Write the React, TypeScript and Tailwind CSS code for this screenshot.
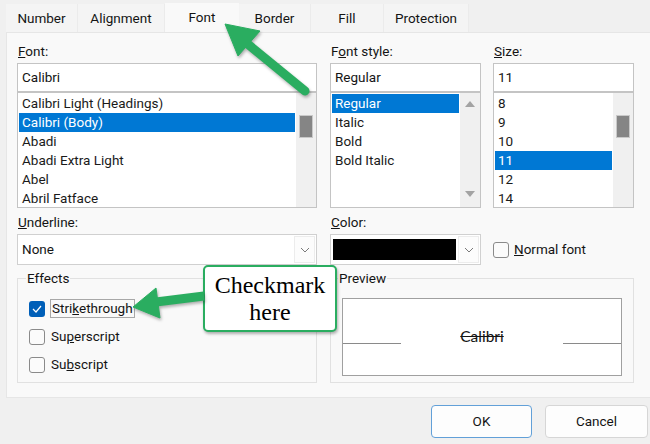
import React from "react";

const tabs = [
  { name: "Number", w: "w-[72px]" },
  { name: "Alignment", w: "w-[87px]" },
  { name: "Font", w: "w-[74px]", active: true },
  { name: "Border", w: "w-[72px]" },
  { name: "Fill", w: "w-[73px]" },
  { name: "Protection", w: "w-[85px]" },
];

const fonts = ["Calibri Light (Headings)", "Calibri (Body)", "Abadi", "Abadi Extra Light", "Abel", "Abril Fatface"];
const styles = ["Regular", "Italic", "Bold", "Bold Italic"];
const sizes = ["8", "9", "10", "11", "12", "14"];

function Chevron() {
  return (
    <svg width="10" height="6" viewBox="0 0 10 6">
      <path d="M1 1 L5 5 L9 1" fill="none" stroke="#7a7a7a" strokeWidth="1" />
    </svg>
  );
}

// scrollbar: either a thumb or the two arrows
function ScrollBar({ arrows }: { arrows?: boolean }) {
  return (
    <div className="w-[20px] shrink-0 bg-[#f0f0f0] flex flex-col items-center">
      {arrows ? (
        <div className="flex flex-col items-center justify-between h-full pt-[8px] pb-[10px]">
          <svg width="10" height="6" viewBox="0 0 10 6">
            <path d="M0 6 L5 0 L10 6 Z" fill="#a3a3a3" />
          </svg>
          <svg width="10" height="6" viewBox="0 0 10 6">
            <path d="M0 0 L10 0 L5 6 Z" fill="#a3a3a3" />
          </svg>
        </div>
      ) : (
        <div className="mt-[22px] w-[14px] h-[23px] bg-[#858585] border border-[#c9c9c9]" />
      )}
    </div>
  );
}

function ListBox({ items, selected, arrows }: { items: string[]; selected: number; arrows?: boolean }) {
  return (
    <div className="h-[116px] bg-white border border-[#c4c4c4] flex overflow-hidden">
      <div className="flex-1 pt-[1px] px-[1px]">
        {items.map((it, i) => (
          <div
            key={it}
            className={`h-[19px] leading-[19px] pl-[3px] whitespace-nowrap ${
              i === selected ? "bg-[#0078d4] text-white" : "text-[#1a1a1a]"
            }`}
          >
            {it}
          </div>
        ))}
      </div>
      <ScrollBar arrows={arrows} />
    </div>
  );
}

function Field({ label, value, items, selected, arrows, w }: {
  label: React.ReactNode; value: string; items: string[]; selected: number; arrows?: boolean; w: string;
}) {
  return (
    <div className={`${w} flex flex-col`}>
      <div className="h-[18px] leading-[18px] pl-px">{label}</div>
      <div className="mt-[3px] h-[29px] bg-white border border-[#c4c4c4] pl-[4px] leading-[27px]">{value}</div>
      <ListBox items={items} selected={selected} arrows={arrows} />
    </div>
  );
}

function Check({ checked }: { checked?: boolean }) {
  return checked ? (
    <div className="w-[16px] h-[16px] rounded-[3px] bg-[#005fb8] flex items-center justify-center">
      <svg width="10" height="8" viewBox="0 0 10 8">
        <path d="M1 4 L4 7 L9 1" fill="none" stroke="white" strokeWidth="1.2" />
      </svg>
    </div>
  ) : (
    <div className="w-[16px] h-[16px] rounded-[3px] bg-[#fbfbfb] border border-[#8a8a8a]" />
  );
}

export default function App() {
  return (
    <div className="w-[650px] h-[444px] bg-[#f0f0f0] overflow-hidden relative font-['Roboto','Noto_Sans',sans-serif] text-[13.5px] text-[#141414]">
      {/* TABS */}
      <div className="flex items-end h-[32px] pl-[6px]">
        {tabs.map((t) => (
          <div
            key={t.name}
            className={`${t.w} flex items-center justify-center ${
              t.active ? "h-[29px] bg-[#f9f9f9]" : "h-[28px] bg-[#f4f4f4] border-r border-[#ebebeb]"
            }`}
          >
            {t.name}
          </div>
        ))}
      </div>

      {/* PANEL */}
      <div className="ml-[6px] w-[700px] h-[366px] bg-[#f9f9f9] border border-[#e6e6e6] pl-[10px] pt-[9px]">
        <div className="flex">
          <Field w="w-[300px]" label={<><u>F</u>ont:</>} value="Calibri" items={fonts} selected={1} />
          <div className="w-[13px]" />
          <Field w="w-[151px]" label={<>F<u>o</u>nt style:</>} value="Regular" items={styles} selected={0} arrows />
          <div className="w-[12px]" />
          <Field w="w-[141px]" label={<><u>S</u>ize:</>} value="11" items={sizes} selected={3} />
        </div>

        <div className="flex mt-[5px]">
          <div className="w-[300px]">
            <div className="h-[18px] leading-[18px] pl-px"><u>U</u>nderline:</div>
            <div className="mt-[3px] h-[31px] bg-white border border-[#d0d0d0] flex items-center justify-between pl-[4px] pr-[1px]">
              <span>None</span>
              <div className="w-[21px] h-[27px] bg-[#fcfcfc] border border-[#ececec] flex items-center justify-center">
                <Chevron />
              </div>
            </div>
          </div>
          <div className="w-[13px]" />
          <div className="w-[151px]">
            <div className="h-[18px] leading-[18px] pl-px"><u>C</u>olor:</div>
            <div className="mt-[3px] h-[31px] bg-white border border-[#d0d0d0] flex items-center pl-[2px] pr-[1px] gap-[2px]">
              <div className="flex-1 h-[21px] bg-black" />
              <div className="w-[21px] h-[27px] bg-[#fcfcfc] border border-[#ececec] flex items-center justify-center">
                <Chevron />
              </div>
            </div>
          </div>
          <div className="w-[12px]" />
          <div className="pt-[21px]">
            <div className="h-[31px] flex items-center gap-[5px]">
              <Check />
              <span><u>N</u>ormal font</span>
            </div>
          </div>
        </div>

        <div className="flex mt-[13px] gap-[13px]">
          {/* EFFECTS */}
          <div className="relative w-[300px] h-[105px] border border-[#e1e1e1] pl-[11px] pt-[20px] flex flex-col gap-[9px]">
            <span className="absolute -top-[10px] left-[8px] bg-[#f9f9f9] px-px leading-[18px]">Effects</span>
            <div className="h-[19px] flex items-center gap-[5px]">
              <Check checked />
              <span className="border border-[#a8a8a8] px-px leading-[17px]">Stri<u>k</u>ethrough</span>
            </div>
            <div className="h-[19px] flex items-center gap-[6px]">
              <Check />
              <span>Su<u>p</u>erscript</span>
            </div>
            <div className="h-[19px] flex items-center gap-[6px]">
              <Check />
              <span>Su<u>b</u>script</span>
            </div>
          </div>

          {/* PREVIEW */}
          <div className="relative w-[304px] h-[105px] border border-[#e1e1e1] px-[11px] pt-[19px]">
            <span className="absolute -top-[10px] left-[7px] bg-[#f9f9f9] px-px leading-[18px]">Preview</span>
            <div className="h-[78px] bg-white border border-[#a0a0a0] pt-[29px]">
              <div className="flex items-end h-[16px]">
                <div className="w-[58px] border-b border-[#8a8a8a]" />
                <div className="flex-1 text-center font-['Lato',sans-serif] text-[15.5px] leading-[15px] line-through">Calibri</div>
                <div className="w-[58px] border-b border-[#8a8a8a]" />
              </div>
            </div>
          </div>
        </div>
      </div>

      {/* BUTTONS */}
      <div className="flex mt-[7px] pl-[431px] gap-[13px]">
        <div className="w-[101px] h-[33px] shrink-0 bg-[#fdfdfd] border border-[#62a0d8] rounded-[4px] flex items-center justify-center">OK</div>
        <div className="w-[103px] h-[33px] shrink-0 bg-[#fdfdfd] border border-[#d6d6d6] rounded-[4px] flex items-center justify-center">Cancel</div>
      </div>

      {/* CALLOUT */}
      <div className="absolute left-[203px] top-[265px] w-[134px] h-[67px] bg-white border-2 border-[#2aad60] rounded-[5px] shadow-[1px_2px_3px_rgba(0,0,0,0.3)] flex flex-col items-center justify-center font-['Liberation_Serif',serif] text-[24px] leading-[27px] text-black">
        <span>Checkmark</span>
        <span>here</span>
      </div>

      {/* ARROWS */}
      <svg className="absolute inset-0 pointer-events-none" width="650" height="444" viewBox="0 0 650 444">
        <g fill="#2aad60" stroke="#2aad60" style={{ filter: "drop-shadow(1px 2px 1.5px rgba(0,0,0,0.3))" }}>
          <line x1="305" y1="91" x2="244" y2="41" strokeWidth="9" strokeLinecap="round" />
          <path d="M225 24 L260 31 L238 56 Z" strokeWidth="1" strokeLinejoin="round" />
          <line x1="156" y1="302" x2="204" y2="296" strokeWidth="9" />
          <path d="M133 307 L156 288 L160 318 Z" strokeWidth="1" strokeLinejoin="round" />
        </g>
      </svg>
    </div>
  );
}
